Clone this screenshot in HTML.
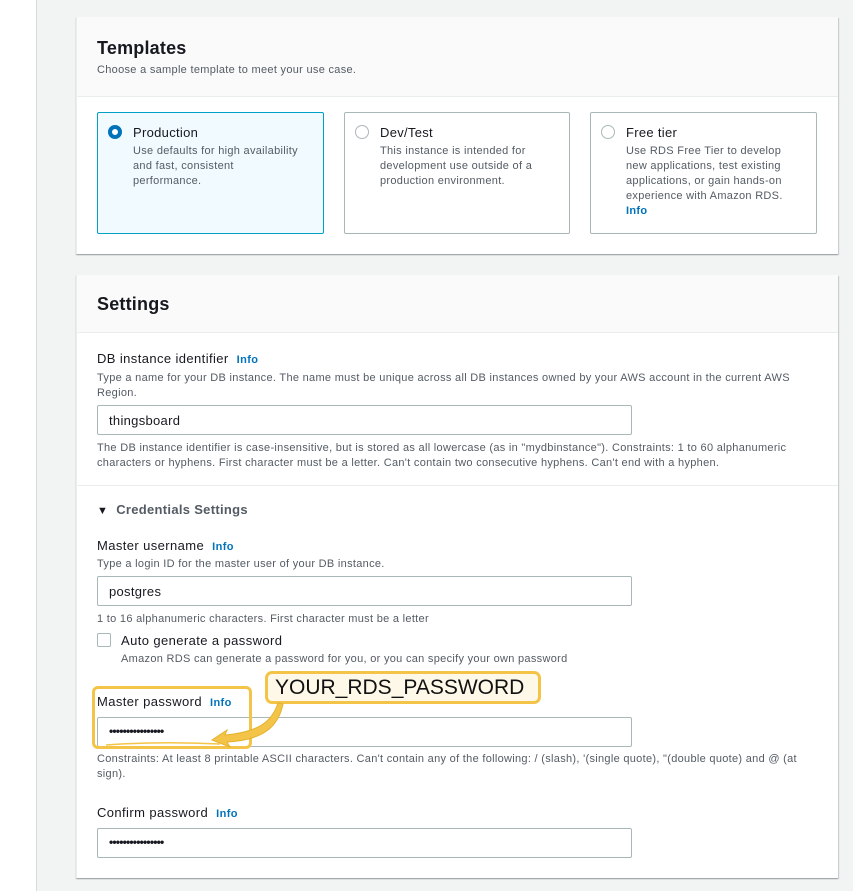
<!DOCTYPE html>
<html><head><meta charset="utf-8"><style>
*{margin:0;padding:0;box-sizing:border-box}
body{width:853px;height:891px;overflow:hidden;background:#f2f3f3;font-family:"Liberation Sans",sans-serif;position:relative;color:#16191f}
.abs{position:absolute}
.strip{left:0;top:0;width:37px;height:891px;background:#fff;border-right:1px solid #d5dbdb}
.panel{background:#fff;left:76px;width:762px;box-shadow:0 1px 1px rgba(0,28,36,.3),1px 1px 1px rgba(0,28,36,.15);border-left:1px solid #eaeded}
.hdr{left:0;top:0;width:100%;background:#fafafa;border-bottom:1px solid #eaeded}
h2{font-size:18px;font-weight:bold;position:absolute;left:20px;color:#16191f;letter-spacing:0.2px}
.s{font-size:11px;color:#545b64;line-height:15px;letter-spacing:0.3px}
.card{top:95px;height:122px;border:1px solid #aab7b8;border-radius:2px;background:#fff}
.card.sel{background:#f1faff;border-color:#00a1c9}
.radio{position:absolute;left:10px;top:12px;width:14px;height:14px;border-radius:50%;border:1px solid #aab7b8;background:#fff}
.radio.on{border:4px solid #0073bb}
.ct{position:absolute;left:35px;top:12px;font-size:13px;color:#16191f;letter-spacing:0.3px}
.cd{position:absolute;left:35px;top:31px;width:172px}
.info{color:#0073bb;font-weight:bold;font-size:11px;margin-left:8px}
.lbl{font-size:13px;color:#16191f;left:20px;letter-spacing:0.4px}
.inp{left:20px;width:535px;height:30px;border:1px solid #aab7b8;border-radius:2px;font-size:13px;padding:7px 11px;background:#fff;letter-spacing:0.3px}
.dots{font-size:12px;font-weight:bold;letter-spacing:-0.8px;padding-top:6px}
</style></head><body>
<div class="abs strip"></div>

<div class="abs panel" style="top:17px;height:237px">
 <div class="abs hdr" style="height:80px">
  <h2 style="top:21px">Templates</h2>
  <div class="abs s" style="left:20px;top:46px">Choose a sample template to meet your use case.</div>
 </div>
 <div class="abs card sel" style="left:20px;width:227px"><div class="radio on"></div><div class="ct">Production</div><div class="cd s">Use defaults for high availability and fast, consistent performance.</div></div>
 <div class="abs card" style="left:267px;width:226px"><div class="radio"></div><div class="ct">Dev/Test</div><div class="cd s">This instance is intended for development use outside of a production environment.</div></div>
 <div class="abs card" style="left:513px;width:227px"><div class="radio"></div><div class="ct">Free tier</div><div class="cd s">Use RDS Free Tier to develop new applications, test existing applications, or gain hands-on experience with Amazon RDS.<br><span style="color:#0073bb;font-weight:bold">Info</span></div></div>
</div>

<div class="abs panel" style="top:275px;height:603px">
 <div class="abs hdr" style="height:58px"><h2 style="top:19px">Settings</h2></div>
 <div class="abs lbl" style="top:76px">DB instance identifier<span class="info">Info</span></div>
 <div class="abs s" style="left:20px;top:96px;width:730px">Type a name for your DB instance. The name must be unique across all DB instances owned by your AWS account in the current AWS Region.</div>
 <div class="abs inp" style="top:130px">thingsboard</div>
 <div class="abs s" style="left:20px;top:166px;width:730px">The DB instance identifier is case-insensitive, but is stored as all lowercase (as in "mydbinstance"). Constraints: 1 to 60 alphanumeric characters or hyphens. First character must be a letter. Can't contain two consecutive hyphens. Can't end with a hyphen.</div>
 <div class="abs" style="left:0;top:210px;width:100%;border-top:1px solid #eaeded"></div>
 <div class="abs" style="left:20px;top:227px;font-size:13px;font-weight:bold;color:#545b64;letter-spacing:0.3px"><span style="font-size:11px;margin-right:8px;color:#16191f">&#9660;</span>Credentials Settings</div>
 <div class="abs lbl" style="top:263px">Master username<span class="info">Info</span></div>
 <div class="abs s" style="left:20px;top:282px">Type a login ID for the master user of your DB instance.</div>
 <div class="abs inp" style="top:301px">postgres</div>
 <div class="abs s" style="left:20px;top:337px">1 to 16 alphanumeric characters. First character must be a letter</div>
 <div class="abs" style="left:20px;top:358px;width:14px;height:14px;border:1px solid #aab7b8;border-radius:2px;background:#fff"></div>
 <div class="abs" style="left:44px;top:358px;font-size:13px;letter-spacing:0.4px">Auto generate a password</div>
 <div class="abs s" style="left:44px;top:377px">Amazon RDS can generate a password for you, or you can specify your own password</div>
 <div class="abs lbl" style="top:419px">Master password<span class="info">Info</span></div>
 <div class="abs inp dots" style="top:442px">&#8226;&#8226;&#8226;&#8226;&#8226;&#8226;&#8226;&#8226;&#8226;&#8226;&#8226;&#8226;&#8226;&#8226;&#8226;&#8226;</div>
 <div class="abs s" style="left:20px;top:477px;width:720px">Constraints: At least 8 printable ASCII characters. Can't contain any of the following: / (slash), '(single quote), "(double quote) and @ (at sign).</div>
 <div class="abs lbl" style="top:530px">Confirm password<span class="info">Info</span></div>
 <div class="abs inp dots" style="top:553px">&#8226;&#8226;&#8226;&#8226;&#8226;&#8226;&#8226;&#8226;&#8226;&#8226;&#8226;&#8226;&#8226;&#8226;&#8226;&#8226;</div>
</div>

<div class="abs" style="left:92px;top:686px;width:160px;height:63px;border:3px solid #f3c447;border-radius:6px"></div>
<div class="abs" style="left:265px;top:671px;width:276px;height:33px;border:3px solid #f3c447;border-radius:7px;background:#fdf8e8;font-size:21px;padding:2px 0 0 7px;color:#111">YOUR_RDS_PASSWORD</div>
<svg class="abs" style="left:100px;top:700px" width="190" height="50">
 <path d="M178 3 C172 22 158 32 125 35 L127 30 L112 40 L130 47 L127 42 C162 40 178 28 183 4Z" fill="#f3c447" stroke="#e6b22e" stroke-width="1"/>
 <path d="M6 45 Q60 41 120 44" stroke="#f3c447" stroke-width="1.5" fill="none"/>
</svg>
</body></html>
